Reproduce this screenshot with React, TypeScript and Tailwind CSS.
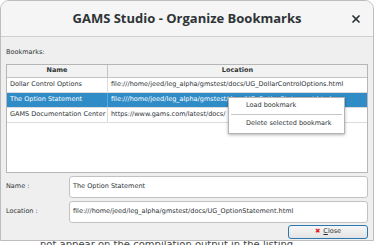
import { X } from 'lucide-react';

const rows = [
  { name: 'Dollar Control Options', location: 'file:///home/jeed/leg_alpha/gmstest/docs/UG_DollarControlOptions.html' },
  { name: 'The Option Statement', location: 'file:///home/jeed/leg_alpha/gmstest/docs/UG_OptionStatement.html', selected: true },
  { name: 'GAMS Documentation Center', location: 'https://www.gams.com/latest/docs/' },
];

export default function App() {
  return (
    <div className="relative w-[376px] h-[245px] bg-white overflow-hidden font-['DejaVu_Sans',sans-serif] text-[#2e3436]">
      {/* page text behind the dialog */}
      <div className="absolute left-[40px] top-[239px] text-[10px] leading-[12px] text-[#444] whitespace-nowrap">
        not appear on the compilation output in the listing
      </div>

      {/* Dialog */}
      <div className="relative w-[374px] h-[241px] flex flex-col rounded-t-[9px] border border-[#bdbdbd] bg-[#efefef] overflow-hidden">
        {/* Title bar */}
        <div className="relative h-[36px] shrink-0 flex items-center justify-center bg-[#f5f5f5] border-b border-[#cfcfcf]">
          <span className="text-[13px] font-bold text-[#2e3436] font-['Open_Sans',sans-serif]">
            GAMS Studio - Organize Bookmarks
          </span>
          <X className="absolute right-[11px] top-[12px] w-[12px] h-[12px] text-[#2e3436]" strokeWidth={3.5} />
        </div>

        <div className="flex flex-col px-[5px] pt-[10px]">
          <div className="text-[6.5px] leading-[10px] h-[17px]">Bookmarks:</div>

          {/* Table */}
          <div className="h-[109px] bg-white border border-[#b6b6b6] text-[6.5px]">
            <div className="flex h-[13px] border-b border-[#c4c4c4] bg-[#f2f2f2] font-bold">
              <div className="w-[101px] flex items-center justify-center border-r border-[#c4c4c4]">Name</div>
              <div className="flex-1 flex items-center justify-center">Location</div>
            </div>
            {rows.map((r) => (
              <div
                key={r.name}
                className={`flex h-[15px] border-b border-[#dcdcdc] whitespace-nowrap ${
                  r.selected ? 'bg-[#308cc6] text-white' : ''
                }`}
              >
                <div className={`w-[101px] flex items-center pl-[3px] border-r overflow-hidden ${r.selected ? 'border-[#5ea6d6]' : 'border-[#dcdcdc]'}`}>
                  {r.name}
                </div>
                <div className="flex-1 flex items-center pl-[3px] overflow-hidden">{r.location}</div>
              </div>
            ))}
          </div>

          {/* Form */}
          <div className="flex items-center h-[23px] mt-[2px]">
            <div className="w-[63px] text-[6.5px]">Name :</div>
            <div className="flex-1 h-[22px] flex items-center pl-[3px] bg-white border border-[#c2c2c2] rounded-[3px] text-[6.5px]">
              The Option Statement
            </div>
          </div>
          <div className="flex items-center h-[23px] mt-[2px]">
            <div className="w-[63px] text-[6.5px]">Location :</div>
            <div className="flex-1 h-[22px] flex items-center pl-[3px] bg-white border border-[#c2c2c2] rounded-[3px] text-[6.5px] whitespace-nowrap">
              file:///home/jeed/leg_alpha/gmstest/docs/UG_OptionStatement.html
            </div>
          </div>

          <div className="flex justify-end mt-[2px]">
            <button className="w-[80px] h-[14px] flex items-center justify-center gap-[3px] rounded-[3px] border border-[#2a76ae] bg-gradient-to-b from-[#f6f6f6] to-[#e4e4e4] text-[6.5px] text-[#2e3436]">
              <span className="text-[#e02020] text-[6.5px]">✖</span>
              <span><span className="underline">C</span>lose</span>
            </button>
          </div>
        </div>
      </div>

      {/* Context menu */}
      <div className="absolute left-[228px] top-[97px] w-[117px] h-[37px] bg-white border border-[#b4b4b4] shadow-[0_1px_3px_rgba(0,0,0,0.3)] text-[6.5px] text-[#2e3436] flex flex-col">
        <div className="h-[16px] flex items-center pl-[17px]">Load bookmark</div>
        <div className="mx-[2px] border-t border-[#c8c8c8]" />
        <div className="h-[18px] flex items-center pl-[17px]">Delete selected bookmark</div>
      </div>
    </div>
  );
}
